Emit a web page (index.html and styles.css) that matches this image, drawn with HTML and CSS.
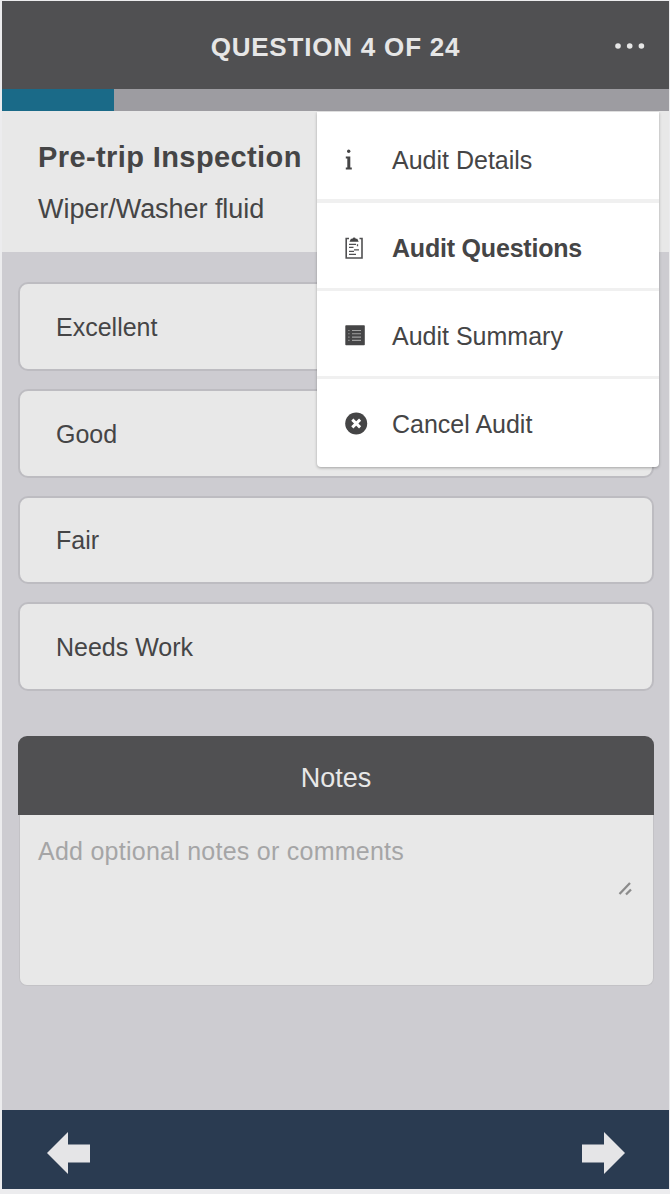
FILE: index.html
```html
<!DOCTYPE html>
<html lang="en">
<head>
<meta charset="utf-8">
<title>Question 4 of 24</title>
<link rel="stylesheet" href="styles.css">
</head>
<body>
<div class="app">
  <header class="topbar">
    <h1 class="topbar-title">QUESTION 4 OF 24</h1>
    <svg class="more" width="30" height="6" viewBox="0 0 30 6"><circle cx="3" cy="3" r="2.8"/><circle cx="14.7" cy="3" r="2.8"/><circle cx="26.4" cy="3" r="2.8"/></svg>
  </header>
  <div class="progress"><div class="progress-fill"></div></div>
  <section class="question">
    <h2 class="question-title">Pre-trip Inspection</h2>
    <p class="question-text">Wiper/Washer fluid</p>
    <nav class="menu">
      <div class="menu-item">
        <svg class="menu-icon" width="24" height="24" viewBox="0 0 24 24"><path d="M0.800 8.500h4.500v11h1.500v2H0.800v-2h1.500v-9H0.800z"/><circle cx="3.700" cy="3.200" r="1.700"/></svg>
        <span class="menu-label">Audit Details</span>
      </div>
      <div class="menu-item">
        <svg class="menu-icon" width="24" height="24" viewBox="0 0 24 24"><path class="line" d="M4 2.500H1.200v19.500h15.800V2.500H14.500"/><path d="M4.500 5.800l1.400-3h1.500a1.800 1.800 0 0 1 3.400 0H12.300l1.400 3z"/><path class="line thin" d="M4 8.300h7M4 11.300h4.500M9 13.800h5M4 15.300h5M4 18.300h7M12.500 8.300v2"/></svg>
        <span class="menu-label menu-label-active">Audit Questions</span>
      </div>
      <div class="menu-item">
        <svg class="menu-icon" width="24" height="24" viewBox="0 0 24 24"><rect x="0.300" y="1.200" width="19.500" height="20" rx="0.800"/><path class="rule" d="M7 6.500h9M7 9.800h9M7 13.100h9M7 16.400h9M3.300 6.500h1.200M3.300 9.800h1.200M3.300 13.100h1.200M3.300 16.400h1.200"/></svg>
        <span class="menu-label">Audit Summary</span>
      </div>
      <div class="menu-item">
        <svg class="menu-icon" width="24" height="24" viewBox="0 0 24 24"><circle cx="11.200" cy="11.500" r="11"/><path class="cross" d="M7.300 7.600l7.800 7.800M15.100 7.600l-7.800 7.800"/></svg>
        <span class="menu-label">Cancel Audit</span>
      </div>
    </nav>
  </section>
  <main class="content">
    <div class="options">
      <div class="option">Excellent</div>
      <div class="option">Good</div>
      <div class="option">Fair</div>
      <div class="option">Needs Work</div>
    </div>
    <section class="notes">
      <h3 class="notes-title">Notes</h3>
      <div class="notes-body">
        <span class="notes-hint">Add optional notes or comments</span>
        <svg class="grip" width="15" height="15" viewBox="0 0 15 15"><path d="M1.500 13L12 2M8 13.500l5-5"/></svg>
      </div>
    </section>
  </main>
  <footer class="footer">
    <svg class="arrow" width="44" height="42" viewBox="0 0 44 42"><path d="M0 21L21 0v12.500h22v18H21V42z"/></svg>
    <svg class="arrow" width="44" height="42" viewBox="0 0 44 42"><path d="M44 21L23 0v12.500H1v18h22V42z"/></svg>
  </footer>
</div>
</body>
</html>
```
FILE: styles.css
```css
* { box-sizing: border-box; }
body {
  margin: 0;
  height: 1194px;
  padding: 1px 1px 0 2px;
  overflow: hidden;
  background: #ececee;
  font-family: "Liberation Sans", Arial, sans-serif;
  color: #454546;
}
h1, h2, h3, p { margin: 0; }
.app {
  height: 1188px;
  display: flex;
  flex-direction: column;
  background: #cdccd1;
}
.topbar {
  height: 88px;
  flex: none;
  display: grid;
  grid-template-columns: 90px 1fr 90px;
  align-items: center;
  background: #505052;
}
.topbar-title {
  grid-column: 2;
  padding-top: 4px;
  text-align: center;
  font-size: 26px;
  line-height: 30px;
  letter-spacing: 0.8px;
  white-space: nowrap;
  color: #e6e6e6;
}
.more { margin: 1px 0 0 36px; fill: #e6e6e6; }
.progress { height: 22px; flex: none; background: #9d9ca1; }
.progress-fill { width: 112px; height: 22px; background: #1a6a88; }
.question {
  position: relative;
  height: 141px;
  flex: none;
  padding: 29px 0 0 36px;
  background: #e8e8e8;
}
.question-title { font-size: 29px; line-height: 34px; letter-spacing: 0.4px; }
.question-text { margin-top: 20px; font-size: 27px; line-height: 30px; letter-spacing: -0.05px; }
.menu {
  position: absolute;
  z-index: 2;
  top: 1px;
  left: 315px;
  width: 342px;
  height: 355px;
  background: #fff;
  border-radius: 0 0 4px 4px;
  box-shadow: 0 1px 3px rgba(0, 0, 0, 0.3);
}
.menu-item {
  height: 88px;
  display: flex;
  align-items: center;
  gap: 23px;
  padding: 4px 0 0 28px;
  border-bottom: 3px solid #f0f0f0;
}
.menu-item:first-child { height: 91px; padding-top: 9px; border-bottom-width: 4px; }
.menu-item:last-child { border-bottom: 0; padding-top: 1px; }
.menu-icon { flex: none; fill: #454546; }
.menu-label { font-size: 25px; line-height: 30px; white-space: nowrap; }
.menu-label-active { font-weight: bold; letter-spacing: -0.2px; }
.line { fill: none; stroke: #505052; stroke-width: 1.6; }
.thin { stroke-width: 1.3; }
.rule { stroke: #a0a0a0; stroke-width: 1.1; }
.cross { stroke: #fff; stroke-width: 3; }
.content { flex: 1; padding: 30px 15px 0 16px; }
.options { display: grid; gap: 18px; }
.option {
  height: 88.800px;
  padding: 2px 0 0 36px;
  display: flex;
  align-items: center;
  background: #e8e8e8;
  border: 2px solid #bdbcc1;
  border-radius: 10px;
  font-size: 25px;
}
.notes { margin-top: 45px; }
.notes-title {
  height: 79px;
  padding-top: 5px;
  display: flex;
  align-items: center;
  justify-content: center;
  background: #505052;
  border-radius: 9px 9px 0 0;
  font-size: 27px;
  font-weight: normal;
  color: #e8e8e8;
}
.notes-body {
  height: 171px;
  margin-left: 1px;
  padding: 21px 20px 0 18px;
  display: flex;
  justify-content: space-between;
  background: #e8e8e8;
  border: 1px solid #c3c2c6;
  border-top: 0;
  border-radius: 0 0 8px 8px;
}
.notes-hint { font-size: 25px; line-height: 30px; letter-spacing: 0.25px; color: #a5a5a6; }
.grip { margin-top: 45px; fill: none; stroke: #8c8c8c; stroke-width: 2.3; }
.footer {
  height: 79px;
  flex: none;
  display: flex;
  justify-content: space-between;
  align-items: center;
  padding: 7px 44px 0 45px;
  background: #2a3b51;
}
.arrow { fill: #e5e5e7; }
```
